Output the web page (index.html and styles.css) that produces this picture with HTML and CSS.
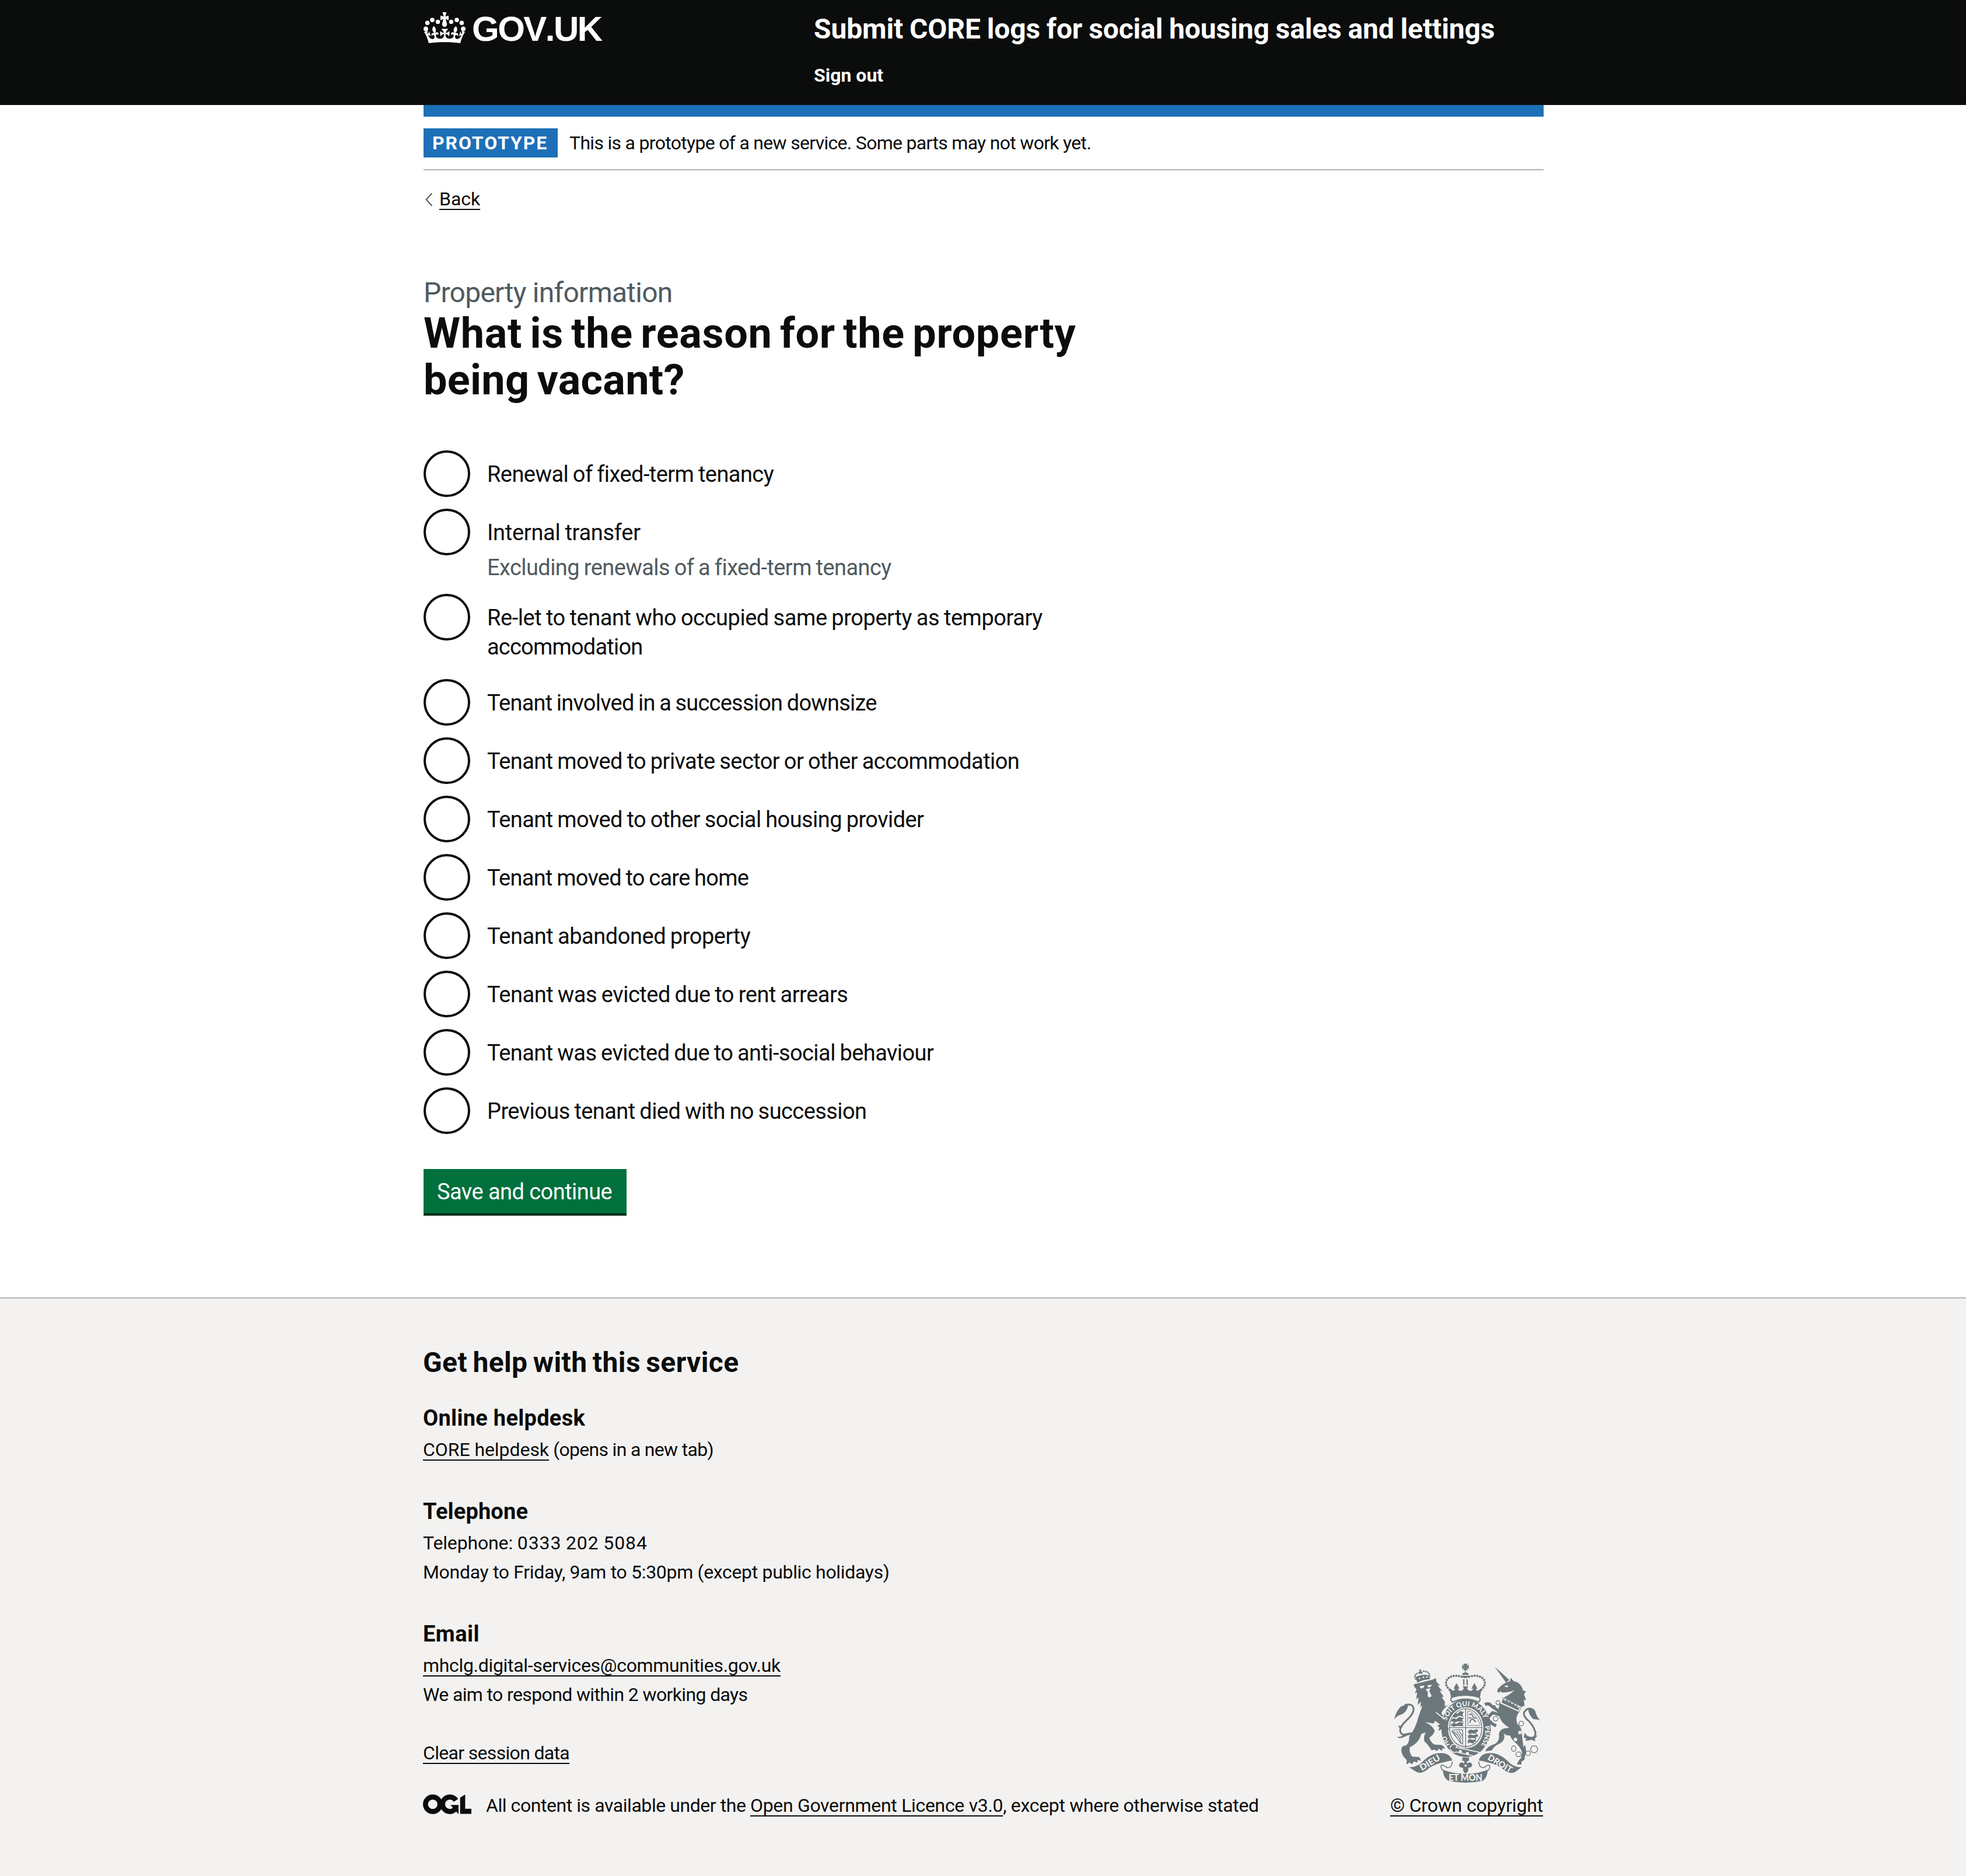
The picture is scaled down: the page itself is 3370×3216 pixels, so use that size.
FILE: index.html
```
<!DOCTYPE html>
<html lang="en">
<head>
<meta charset="utf-8">
<title>What is the reason for the property being vacant?</title>
<link rel="stylesheet" href="styles.css">
</head>
<body>
<header class="header">
  <div class="container header-row">
    <a class="logo" href="#">
      <svg class="crown" width="72" height="54" viewBox="0 0 72 54">
        <g fill="#fff">
          <circle cx="3.9" cy="28.5" r="3.9"/><circle cx="6.6" cy="18.3" r="3.8"/><circle cx="15" cy="13.2" r="3.8"/><circle cx="24.6" cy="16.4" r="3.7"/>
          <circle cx="68.1" cy="28.5" r="3.9"/><circle cx="65.4" cy="18.3" r="3.8"/><circle cx="57" cy="13.2" r="3.8"/><circle cx="47.4" cy="16.4" r="3.7"/>
          <path d="M32.6 0h6.8l-2 7.3 5.6-1.6v8l-5-2.2 2.1 8.2a4.2 4.6 0 1 1-8.2 0l2.1-8.2-5 2.2v-8l5.6 1.6z"/>
          <path transform="translate(.8 -13) scale(2.2)" d="M16 29.2c4.400 0 8.600.3 12.300.8 1.100-4.500 2.400-7 3.700-8.800l-2.500-.9c.2 1.300.3 1.900 0 2.700-.4-.4-.8-1.100-1.100-2.300l-1.200 4c.7-.5 1.300-.8 2-.9-1.100 2.500-2.600 3.100-3.500 3-1.100-.2-1.700-1.200-1.500-2.100.3-1.200 1.500-1.500 2.100-.1 1.100-2.300-.8-3-2-2.300 1.900-1.900 2.100-3.500.6-5.600-2.100 1.600-2.100 3.200-1.200 5.500-1.200-1.400-3.200-.6-2.500 1.600.9-1.400 2.100-.5 1.900.8-.2 1.100-1.700 2.100-3.500 1.900-2.700-.2-2.900-2.100-2.900-3.600.7-.1 1.900.5 2.900 1.900l.4-4.300c-1.100 1.100-2.100 1.400-3.200 1.400.4-1.200 2.100-3 2.100-3h-5.400s1.700 1.900 2.100 3c-1.100 0-2.100-.2-3.200-1.400l.4 4.300c1-1.400 2.200-2 2.900-1.900-.1 1.500-.2 3.400-2.900 3.600-1.900.2-3.400-.8-3.500-1.900-.2-1.300 1-2.200 1.900-.8.7-2.300-1.200-3-2.500-1.600.9-2.200.9-3.900-1.200-5.500-1.500 2-1.300 3.700.6 5.600-1.200-.7-3.100 0-2 2.300.6-1.400 1.800-1.100 2.100.1.2.9-.3 1.900-1.500 2.100-.9.2-2.400-.5-3.500-3 .6 0 1.200.3 2 .9l-1.200-4c-.3 1.100-.7 1.900-1.100 2.300-.3-.8-.2-1.400 0-2.700L0 21.200C1.300 23 2.600 25.500 3.700 30c3.700-.5 7.900-.8 12.300-.8"/>
        </g>
      </svg>
      <span class="wordmark">GOV.UK</span>
    </a>
    <div class="header-content">
      <a class="service-name" href="#">Submit CORE logs for social housing sales and lettings</a>
      <a class="sign-out" href="#">Sign out</a>
    </div>
  </div>
</header>

<div class="container">
  <div class="blue-bar"></div>
  <div class="phase-banner">
    <strong class="tag">PROTOTYPE</strong>
    <span class="phase-text">This is a prototype of a new service. Some parts may not work yet.</span>
  </div>
  <div class="back">
    <svg width="16" height="24" viewBox="0 0 16 24"><path d="M14.500 1.200 4.500 12 14.500 22.800" fill="none" stroke="#505a5f" stroke-width="2"/></svg>
    <a class="link" href="#">Back</a>
  </div>

  <main>
    <form class="question">
      <span class="caption">Property information</span>
      <h1 class="title">What is the reason for the property<br><span class="title-end">being vacant?</span></h1>
      <div class="radios">
        <div class="radio"><span class="circle"></span><label class="label">Renewal of fixed-term tenancy</label></div>
        <div class="radio"><span class="circle"></span><div><label class="label label-internal">Internal transfer</label><div class="hint">Excluding renewals of a fixed-term tenancy</div></div></div>
        <div class="radio"><span class="circle"></span><label class="label label-relet">Re-let to tenant who occupied same property as temporary<br><span class="relet-end">accommodation</span></label></div>
        <div class="radio"><span class="circle"></span><label class="label label-succession">Tenant involved in a succession downsize</label></div>
        <div class="radio"><span class="circle"></span><label class="label">Tenant moved to private sector or other accommodation</label></div>
        <div class="radio"><span class="circle"></span><label class="label label-provider">Tenant moved to other social housing provider</label></div>
        <div class="radio"><span class="circle"></span><label class="label label-care">Tenant moved to care home</label></div>
        <div class="radio"><span class="circle"></span><label class="label label-abandoned">Tenant abandoned property</label></div>
        <div class="radio"><span class="circle"></span><label class="label label-arrears">Tenant was evicted due to rent arrears</label></div>
        <div class="radio"><span class="circle"></span><label class="label label-provider">Tenant was evicted due to anti-social behaviour</label></div>
        <div class="radio"><span class="circle"></span><label class="label">Previous tenant died with no succession</label></div>
      </div>
      <button class="button" type="button">Save and continue</button>
    </form>
  </main>
</div>

<footer class="footer">
  <div class="footer-inner">
    <div class="footer-main">
      <h2 class="footer-title">Get help with this service</h2>
      <section class="contact">
        <h3 class="contact-title">Online helpdesk</h3>
        <p class="para helpdesk"><a class="link core-link" href="#">CORE helpdesk</a> (opens in a new tab)</p>
      </section>
      <section class="contact">
        <h3 class="contact-title phone-title">Telephone</h3>
        <p class="para phone">Telephone: <span class="number">0333 202 5084</span></p>
        <p class="para hours">Monday to Friday, 9am to 5:30pm (except public holidays)</p>
      </section>
      <section class="contact">
        <h3 class="contact-title email-title">Email</h3>
        <p class="para hours"><a class="link" href="#">mhclg.digital-services@communities.gov.uk</a></p>
        <p class="para respond">We aim to respond within 2 working days</p>
      </section>
      <p class="para clear"><a class="link" href="#">Clear session data</a></p>
      <div class="licence">
        <svg class="ogl" width="83" height="34" viewBox="0 0 483.200 195.700"><path fill="#0b0c0c" d="M421.500 142.800V.1l-50.700 32.300v161.100h112.400v-50.700zm-122.300-9.600A47.120 47.120 0 0 1 221 97.800c0-26 21.100-47.100 47.100-47.100 16.700 0 31.400 8.700 39.700 21.800l42.700-27.200A97.630 97.630 0 0 0 268.100 0c-36.500 0-68.300 20.100-85.100 49.700A98 98 0 0 0 97.800 0C43.900 0 0 43.900 0 97.800s43.900 97.800 97.800 97.800c36.500 0 68.300-20.100 85.100-49.700a97.760 97.760 0 0 0 149.600 25.400l19.400 22.200h3v-87.800h-80l24.300 27.500zM97.800 145c-26 0-47.100-21.100-47.100-47.100s21.100-47.100 47.100-47.100 47.100 21.100 47.100 47.100S123.800 145 97.800 145"/></svg>
        <p class="para licence-text"><span class="licence-lead">All content is available under the </span><a class="link" href="#">Open Government Licence v3.0</a>, except where otherwise stated</p>
      </div>
    </div>
    <div class="copyright">
      <svg class="crest" width="250" height="204" viewBox="60 66 750 612">
        <defs>
          <path id="garter-top" d="M328 360C345 312 385 284 428 284C478 284 515 315 530 375"/>
          <path id="garter-right" d="M525 388C534 430 520 480 480 515"/>
        </defs>
        <g class="ink">
          <!-- lion -->
          <path d="M162 184L160 172L178 168L258 148L274 140L277 160L297 179L282 178L308 207L293 205L315 238L303 236L320 262L319 284L336 280Q312 298 302 320L322 352L340 402L330 422L321 406L308 424L305 402L286 412L292 394L281 384L296 379L270 360L262 374L218 366Q262 388 268 412Q260 436 240 446Q248 474 268 482L300 484Q318 488 320 505L308 500L305 515L290 503L280 515L266 508L252 512Q232 480 215 466Q208 440 222 420Q206 424 198 428Q190 470 140 496Q134 520 152 544L186 546Q196 552 195 566L182 561L176 576L162 568L150 584L140 574L122 584L124 562Q98 540 96 510Q98 484 118 488Q138 476 137 440Q170 400 184 340L206 280L194 291L197 262L180 278L185 240L172 248L178 214L166 218L174 198Z"/>
          <path d="M178 164L170 134Q205 118 238 126L240 146Q205 148 178 164ZM186 118L182 108L190 110L188 97L198 96L198 108L206 106L204 118Z"/>
          <path class="pearls small" d="M170 144Q156 122 186 114M240 140Q250 106 206 104"/>
          <path class="line" stroke-width="9" d="M150 424Q92 446 90 408Q92 386 122 358Q170 316 156 286Q144 270 112 280"/>
          <path d="M60 354Q64 324 84 298Q96 276 132 280Q122 322 90 330Q72 334 60 354M74 440Q96 448 104 428L150 418Q120 446 84 450ZM90 404L80 385L104 388Z"/>
          <!-- unicorn -->
          <path d="M576 81L652 150L634 163Z"/>
          <path d="M592 197Q620 164 656 156L658 138L674 156Q712 162 722 204L737 208L727 224L738 254L726 252L730 282L716 288L622 240Q650 230 678 202Q650 216 612 214L605 206L600 217L589 208Z"/>
          <path d="M604 268L704 312Q680 340 692 374Q718 396 716 430L724 494L733 484L738 512L729 560L714 570L714 585L690 584Q698 564 712 550L717 524Q708 492 684 474Q664 460 656 436Q626 436 622 420Q636 460 600 478Q572 490 562 512L528 517Q534 492 580 478Q604 460 598 428Q602 396 652 396Q604 368 596 326Q592 300 604 268Z"/>
          <path class="line" stroke-width="16" d="M600 312Q574 294 560 284Q546 266 526 276M604 330L566 318L540 344Q548 370 584 386"/>
          <path class="line" stroke-width="9" d="M736 458Q788 456 786 420Q774 378 742 352Q712 322 740 302Q754 292 770 304"/>
          <path d="M748 294Q782 290 788 320Q792 336 809 358Q792 350 776 352Q750 330 748 294M730 420Q748 456 798 434L782 452L786 466L760 455Q736 454 726 444Z"/>
          <!-- crown -->
          <path d="M414 66H438L431 77L443 71V95L431 88L438 100H414L421 88L409 95V71L421 77Z"/>
          <path d="M424 100H428V112Q442 112 444 124H408Q410 112 424 112ZM406 128H446Q440 140 426 140Q412 140 406 128ZM414 146H421V176H414ZM431 146H438V176H431Z"/>
          <path class="pearls" d="M344 200Q314 170 334 144Q362 118 408 134M508 200Q538 170 518 144Q490 118 444 134"/>
          <path d="M342 190L360 204Q370 208 372 194L364 196Q372 180 380 166Q388 180 396 196L386 194Q392 212 412 202L418 192L410 182H442L434 192L440 202Q460 212 466 194L456 196Q464 180 472 166Q480 180 488 196L480 194Q482 208 492 204L510 190L500 240Q426 222 352 240Z"/>
          <path class="line" stroke-width="6" d="M354 240Q426 214 498 240Q506 252 494 264Q426 232 358 264Q346 252 354 240Z"/>
          <!-- garter -->
          <path fill-rule="evenodd" d="M428 250C500 250 556 316 556 398S500 546 428 546S302 480 302 398S356 250 428 250ZM428 290C380 290 336 336 336 396S372 500 428 500S518 456 518 396S478 290 428 290Z"/>
          <path class="line" stroke-width="4" d="M427 298C384 298 344 340 344 396S378 492 427 492S510 452 510 396S470 298 427 298ZM427 298V498M342 395H512"/>
          <path d="M360 332L376 318L384 324L400 310L418 314L410 328L418 338L392 334L376 344L362 340ZM350 358L366 346L378 352L394 340L418 346L408 356L418 366L388 362L368 370ZM348 382L366 370L380 376L396 366L418 372L410 380L418 388L386 386L364 390Z"/>
          <path d="M438 412L452 404L468 408L486 402L492 414L478 420L486 428L460 424L444 428ZM438 436L452 430L468 434L486 428L492 440L478 444L484 452L460 448L442 452ZM438 460L450 454L464 458L478 454L480 466L468 470L470 478L448 472L438 476Z"/>
          <path class="line" stroke-width="3" d="M438 308V384H502M438 308Q474 312 502 380"/>
          <path class="line" stroke-width="6" d="M446 330Q458 318 462 334Q466 350 482 344M450 372Q448 354 462 350L480 366M444 346L456 344"/>
          <path class="line" stroke-width="4" d="M356 412Q386 400 412 408V480Q396 470 356 412ZM370 416Q392 438 402 466M380 412Q396 430 406 452M362 414Q380 446 402 476M392 409L408 436"/>
          <!-- motto scroll and badge -->
          <path d="M410 548H444V566H434V580Q452 566 460 584Q462 600 444 600L440 604Q444 622 427 630Q410 622 414 604L408 600Q390 600 394 584Q402 566 420 580V566H410Z"/>
          <path d="M135 598Q178 602 214 562Q256 524 300 526Q346 526 358 564Q338 566 312 574Q260 584 228 612Q196 636 172 622ZM716 598Q672 602 638 562Q596 524 552 526Q506 526 494 564Q514 566 540 574Q592 584 624 612Q656 636 680 624Z"/>
          <path d="M310 612Q426 654 540 612Q540 650 516 668Q426 688 338 668Q312 654 310 612Z"/>
          <path class="line" stroke-width="5" d="M358 570Q354 606 330 600Q306 580 300 592Q300 610 316 620M494 570Q498 606 522 600Q546 580 551 592Q552 610 536 620"/>
        </g>
        <g class="paper">
          <path d="M190 182L216 178L210 190L196 194ZM230 178L254 174L246 186L234 188ZM220 198L246 192L240 206L252 232Q242 246 232 234L232 210ZM625 182Q636 176 648 180L640 188Z"/>
          <circle cx="190" cy="142" r="4"/><circle cx="210" cy="136" r="4"/><circle cx="228" cy="134" r="4"/>
          <circle cx="400" cy="517" r="8"/><circle cx="436" cy="528" r="8"/>
          <circle cx="706" cy="420" r="9"/><circle cx="683" cy="456" r="9"/><circle cx="427" cy="590" r="6"/>
          <path d="M612 238L716 288L702 314L604 270Z"/>
        </g>
        <g class="ink">
          <path d="M618 246L632 258L640 250L646 264L658 262L664 274L676 270L680 282L692 280L694 294L706 288L698 306L612 266Z"/>
          <path class="line" stroke-width="3" d="M614 240L714 288L702 313"/>
        </g>
        <g class="white-line">
          <path stroke-width="5" d="M346 500Q358 470 382 486L378 496L506 524M346 505Q360 528 380 520L492 546M274 316L318 352"/>
        </g>
        <g class="line-ink">
          <circle cx="593" cy="266" r="10"/><circle cx="572" cy="290" r="8"/><circle cx="581" cy="349" r="12"/><circle cx="713" cy="374" r="12"/>
          <ellipse cx="674" cy="503" rx="11" ry="14"/><ellipse cx="699" cy="532" rx="14" ry="12"/><circle cx="748" cy="527" r="12"/><circle cx="779" cy="506" r="18"/>
        </g>
        <g class="motto">
          <text font-size="35"><textPath href="#garter-top">SOIT QUI MALY</textPath></text>
          <text font-size="33"><textPath href="#garter-right">PENSE</textPath></text>
          <text font-size="33" transform="translate(346 484) rotate(-115)">HO</text>
          <text font-size="44" transform="translate(202 617) rotate(-31)" textLength="114" lengthAdjust="spacingAndGlyphs">DIEU</text>
          <text font-size="44" transform="translate(537 557) rotate(31)" textLength="138" lengthAdjust="spacingAndGlyphs">DROIT</text>
          <text font-size="52" x="340" y="670" textLength="173" lengthAdjust="spacingAndGlyphs">ET MON</text>
        </g>
      </svg>
      <a class="link crown-link" href="#">© Crown copyright</a>
    </div>
  </div>
</footer>
</body>
</html>
```
FILE: styles.css
```
* { box-sizing: border-box; }
body {
  margin: 0;
  background: #fff;
  color: #0b0c0c;
  font: 400 32px/50px Roboto, "Liberation Sans", sans-serif;
  letter-spacing: -0.4px;
}
h1, h2, h3, p { margin: 0; }
a { color: inherit; text-decoration: none; }
svg { display: block; flex: none; }
.link {
  text-decoration: underline;
  text-decoration-thickness: 2px;
  text-underline-offset: 6px;
  text-decoration-skip-ink: none;
}
.container { width: 1920px; margin-left: 726px; }

/* Header */
.header { height: 180px; background: #0b0c0c; color: #fff; }
.header-row { display: flex; padding-top: 10px; }
.logo { display: flex; gap: 11px; width: 669px; }
.crown { margin-top: 11px; }
.wordmark { font: 700 60px/80px "Liberation Sans", sans-serif; font-kerning: none; letter-spacing: -2.5px; }
.header-content { display: flex; flex-direction: column; align-items: flex-start; padding-top: 10px; }
.service-name { font-size: 48px; line-height: 60px; font-weight: 700; letter-spacing: -0.12px; word-spacing: -1px; }
.sign-out { margin-top: 24px; font-weight: 700; letter-spacing: 0; }

/* Phase banner and back link */
.blue-bar { height: 20px; background: #1d70b8; }
.phase-banner {
  display: flex;
  gap: 20px;
  padding: 20px 0;
  border-bottom: 2px solid #b1b4b6;
}
.tag {
  width: 230px;
  height: 50px;
  padding-left: 15px;
  background: #1d70b8;
  color: #fff;
  letter-spacing: 1.9px;
}
.phase-text { letter-spacing: -0.7px; }
.back { display: flex; gap: 11px; margin-top: 29px; line-height: 40px; letter-spacing: -0.05px; }
.back svg { margin-top: 9px; }

/* Question */
.question { padding-top: 111px; }
.caption { display: block; font-size: 48px; line-height: 60px; color: #505a5f; letter-spacing: -0.75px; }
.title { font-size: 72px; line-height: 80px; font-weight: 700; letter-spacing: 0.7px; word-spacing: -5.2px; }
.title-end { letter-spacing: 0.3px; }
.radios { display: flex; flex-direction: column; gap: 20px; margin: 80px 0 60px; font-size: 38px; word-spacing: -1.2px; }
.radio { display: flex; gap: 29px; min-height: 80px; }
.circle { flex: none; width: 80px; height: 80px; border: 4px solid #0b0c0c; border-radius: 50%; }
.label { display: block; padding: 16px 0 10px; letter-spacing: -0.57px; }
.label-internal { letter-spacing: -0.28px; }
.label-relet { letter-spacing: -0.45px; }
.relet-end { letter-spacing: -0.8px; }
.label-succession { letter-spacing: -0.78px; }
.label-provider { letter-spacing: -0.57px; }
.label-care { letter-spacing: -0.73px; }
.label-abandoned { letter-spacing: -0.47px; }
.label-arrears { letter-spacing: -0.5px; }
.hint { color: #505a5f; letter-spacing: -0.57px; }
.button {
  display: block;
  width: 348px;
  height: 76px;
  padding: 1px 0 0 23px;
  border: 0;
  background: #00703c;
  box-shadow: 0 4px 0 #002d18;
  color: #fff;
  font: 400 38px/50px Roboto, "Liberation Sans", sans-serif;
  letter-spacing: -0.55px;
  text-align: left;
}

/* Footer */
.footer { margin-top: 144px; height: 992px; border-top: 2px solid #b1b4b6; background: #f3f2f1; }
.footer-inner {
  display: flex;
  justify-content: space-between;
  align-items: flex-end;
  width: 1920px;
  margin-left: 725px;
  padding-top: 80px;
}
.footer-title { margin-bottom: 40px; font-size: 48px; line-height: 60px; letter-spacing: 0.4px; word-spacing: -3px; }
.contact { margin-bottom: 56px; }
.contact-title { margin-bottom: 4px; font-size: 38px; line-height: 50px; letter-spacing: 0.28px; }
.phone-title { letter-spacing: 0.13px; }
.email-title { letter-spacing: 0.45px; }
.helpdesk { letter-spacing: -0.7px; }
.core-link { letter-spacing: -0.06px; }
.phone { letter-spacing: -0.15px; }
.number { letter-spacing: 0.9px; word-spacing: -1.2px; }
.hours { letter-spacing: -0.32px; }
.respond { letter-spacing: -0.63px; }
.clear { margin: -6px 0 40px; letter-spacing: -0.68px; }
.licence { display: flex; gap: 25px; }
.ogl { margin-top: 6px; }
.licence-text { letter-spacing: -0.32px; }
.licence-lead { letter-spacing: -0.44px; }
.copyright { display: flex; flex-direction: column; align-items: flex-end; }
.crest { margin: 0 5px 14px 0; }
.crown-link { letter-spacing: -0.17px; }
.ink { fill: #6c777b; }
.paper { fill: #f3f2f1; }
.line, .line-ink { fill: none; stroke: #6c777b; }
.line-ink { stroke-width: 4; }
.pearls { fill: none; stroke: #6c777b; stroke-width: 12; stroke-linecap: round; stroke-dasharray: 0 14; }
.small { stroke-width: 9; stroke-dasharray: 0 11; }
.white-line { fill: none; stroke: #f3f2f1; }
.motto { fill: #f3f2f1; font-family: Lato, sans-serif; font-weight: 900; letter-spacing: 0; }
```
